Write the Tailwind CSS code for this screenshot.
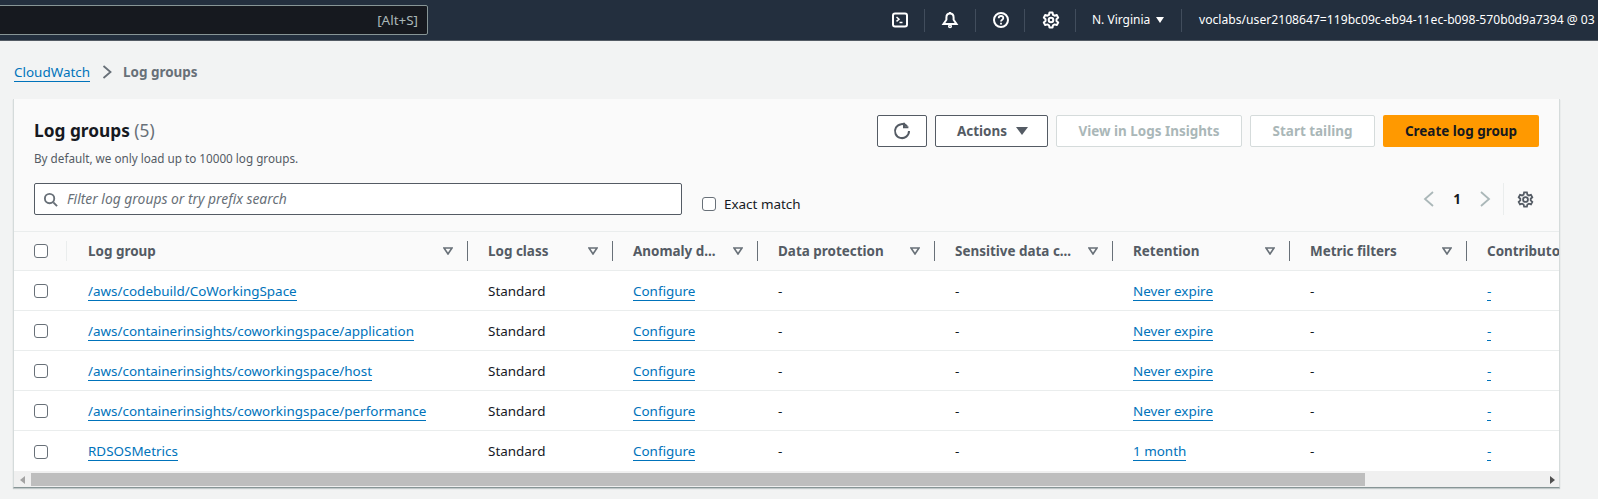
<!DOCTYPE html>
<html lang="en">
<head>
<meta charset="UTF-8">
<title>Log groups | CloudWatch</title>
<script src="https://cdn.jsdelivr.net/npm/@tailwindcss/browser@4"></script>
</head>
<body class="h-[499px] w-[1598px] overflow-hidden bg-[#f2f3f3] font-['Noto_Sans',sans-serif] text-[13.45px] text-[#16191f]">

<!-- top nav -->
<header class="flex h-[41px] items-center overflow-hidden border-b border-[#545b64] bg-[#232f3e] text-white">
  <div class="ml-[-2px] flex h-[30px] w-[430px] shrink-0 items-center justify-end rounded-r-[2px] border border-[#879596] bg-[#16191f] pr-[9px] text-[13.45px] text-[#aab7b8]">[Alt+S]</div>
  <div class="ml-[463px] flex items-center">
    <svg class="h-[18px] w-[18px]" viewBox="0 0 18 18" fill="none" stroke="white" stroke-width="2"><rect x="2" y="2.500" width="14" height="13" rx="2"/><path d="M5.500 6 8 8.200 5.500 10.400" stroke-width="1.500"/><path d="M8.500 11.500h3" stroke-width="1.500"/></svg>
    <div class="ml-[15px] h-[23px] w-px bg-[#414d5c]"></div>
    <svg class="ml-[16px] h-[18px] w-[18px]" viewBox="0 0 18 18" fill="none" stroke="white" stroke-width="2"><path d="M9 2.500c-2.500 0-3.600 2-3.600 4v2.300L2.500 13h13l-2.900-4.200V6.500c0-2-1.100-4-3.600-4Z"/><path d="M9 1v1.500"/><circle cx="9" cy="15.300" r="1.300" stroke-width="1.500"/></svg>
    <div class="ml-[16px] h-[23px] w-px bg-[#414d5c]"></div>
    <svg class="ml-[16px] h-[18px] w-[18px]" viewBox="0 0 18 18" fill="none" stroke="white" stroke-width="2"><circle cx="9" cy="9" r="7"/><path d="M6.700 7.200C6.700 5.900 7.700 5 9 5s2.300.9 2.300 2.100c0 1.700-2.300 1.700-2.300 3.500" stroke-width="1.800"/><path d="M9 11.800v1.700" stroke-width="1.800"/></svg>
    <div class="ml-[14px] h-[23px] w-px bg-[#414d5c]"></div>
    <svg class="ml-[17px] h-[18px] w-[18px]" viewBox="0 0 18 18" fill="none" stroke="white" stroke-width="2" stroke-linejoin="round"><circle cx="9" cy="9" r="2.300"/><path d="M7.500 1.500h3l.5 2.300 1.600.9 2.200-.7 1.400 2.600-1.700 1.600v1.700l1.700 1.600-1.400 2.600-2.200-.7-1.600.9-.5 2.300h-3l-.5-2.300-1.600-.9-2.200.7L1.800 11.500l1.700-1.600V8.200L1.800 6.600l1.400-2.600 2.200.7L7 3.800Z"/></svg>
    <div class="ml-[15px] h-[23px] w-px bg-[#414d5c]"></div>
    <span class="ml-[16px] w-[57px] whitespace-nowrap text-[12px]">N. Virginia</span>
    <span class="ml-[7px] h-0 w-0 border-x-[4px] border-t-[6px] border-x-transparent border-t-white"></span>
    <div class="ml-[17px] h-[23px] w-px bg-[#414d5c]"></div>
    <span class="ml-[17px] whitespace-nowrap text-[12.15px]">voclabs/user2108647=119bc09c-eb94-11ec-b098-570b0d9a7394 @ 03</span>
  </div>
</header>

<!-- breadcrumb -->
<nav class="flex h-[58px] items-center pl-[14px] pt-[4px]">
  <a class="border-b border-[#0073bb] leading-[18px] text-[#0073bb]">CloudWatch</a>
  <svg class="ml-[12px] h-[14px] w-[10px]" viewBox="0 0 10 14" fill="none" stroke="#687078" stroke-width="1.800"><path d="M1.500 1l7 6-7 6"/></svg>
  <span class="ml-[11px] font-bold text-[#687078]">Log groups</span>
</nav>

<!-- card -->
<section class="ml-[13px] h-[389px] w-[1547px] overflow-hidden border-x border-b border-[#d5dbdb] border-b-[#879596] bg-[#fafafa] shadow-[0_1px_1px_rgba(0,28,36,0.2)]">
  <div class="flex items-start justify-between pl-[20px] pr-[20px] pt-[16px]">
    <div>
      <h1 class="text-[17.3px] font-bold leading-[32px]">Log groups <span class="font-normal text-[#687078]">(5)</span></h1>
      <p class="mt-[3px] text-[11.7px] leading-[16px] text-[#545b64]">By default, we only load up to 10000 log groups.</p>
    </div>
    <div class="flex gap-[8px] font-bold">
      <button class="flex h-[32px] w-[50px] items-center justify-center rounded-[2px] border border-[#545b64] bg-white">
        <svg class="h-[18px] w-[18px]" viewBox="0 0 18 18" fill="none" stroke="#545b64" stroke-width="2"><path d="M14 4.200A7 7 0 1 0 16 9"/><path d="M11 .8v4.400h4.400"/></svg>
      </button>
      <button class="flex h-[32px] w-[113px] items-center justify-center gap-[9px] rounded-[2px] border border-[#545b64] bg-white pl-[2px] text-[#545b64]">Actions <span class="h-0 w-0 border-x-[6px] border-t-[8px] border-x-transparent border-t-[#545b64]"></span></button>
      <button class="h-[32px] w-[186px] rounded-[2px] border border-[#d5dbdb] bg-white text-[#aab7b8]">View in Logs Insights</button>
      <button class="h-[32px] w-[125px] rounded-[2px] border border-[#d5dbdb] bg-white text-[#aab7b8]">Start tailing</button>
      <button class="h-[32px] w-[156px] rounded-[2px] bg-[#ff9900] text-[#16191f]">Create log group</button>
    </div>
  </div>

  <div class="mt-[17px] flex h-[32px] items-center pl-[20px] pr-[25px]">
    <div class="flex h-[32px] w-[648px] items-center rounded-[2px] border border-[#545b64] bg-white pl-[8px] text-[13.85px] italic text-[#687078]">
      <svg class="mr-[9px] h-[15px] w-[15px]" viewBox="0 0 16 16" fill="none" stroke="#687078" stroke-width="2"><circle cx="7" cy="7" r="5"/><path d="m11 11 4 4"/></svg>
      Filter log groups or try prefix search
    </div>
    <label class="ml-[20px] mt-[10px] flex items-center gap-[8px] text-[#16191f]">
      <span class="h-[14px] w-[14px] rounded-[3px] border border-[#687078] bg-white"></span>
      Exact match
    </label>
    <div class="ml-auto flex items-center">
      <svg class="h-[16px] w-[12px]" viewBox="0 0 12 16" fill="none" stroke="#aab7b8" stroke-width="1.800"><path d="M10 1 2 8l8 7"/></svg>
      <span class="ml-[18px] font-bold">1</span>
      <svg class="ml-[18px] h-[16px] w-[12px]" viewBox="0 0 12 16" fill="none" stroke="#aab7b8" stroke-width="1.800"><path d="m2 1 8 7-8 7"/></svg>
      <div class="ml-[12px] h-[32px] w-px bg-[#eaeded]"></div>
      <svg class="ml-[13px] h-[17px] w-[17px]" viewBox="0 0 18 18" fill="none" stroke="#545b64" stroke-width="1.900"><circle cx="9" cy="9" r="2.600"/><path d="M7.500 1.500h3l.5 2.300 1.600.9 2.200-.7 1.400 2.600-1.700 1.600v1.700l1.700 1.600-1.400 2.600-2.200-.7-1.600.9-.5 2.300h-3l-.5-2.300-1.600-.9-2.200.7L1.800 11.500l1.700-1.600V8.200L1.800 6.600l1.400-2.600 2.200.7L7 3.800Z"/></svg>
    </div>
  </div>

  <!-- table, wider than the card so the last column is cut off -->
  <div class="mt-[16px] overflow-hidden">
    <div class="w-[1700px]">
      <div class="grid h-[40px] grid-cols-[53px_401px_145px_145px_177px_178px_177px_177px_177px] items-center border-y border-[#eaeded] font-bold text-[#545b64]">
        <div class="flex h-[20px] items-center justify-between"><span class="ml-[20px] h-[14px] w-[14px] rounded-[3px] border border-[#687078] bg-white"></span><span class="h-[20px] w-px bg-[#eaeded]"></span></div>
        <div class="flex h-[20px] items-center justify-between border-r border-[#687078] pl-[21px] pr-[14px]">Log group<svg class="h-[8px] w-[10px]" viewBox="0 0 10 8" fill="#fafafa" stroke="#687078" stroke-width="1.600"><path d="M1 1h8L5 7Z"/></svg></div>
        <div class="flex h-[20px] items-center justify-between border-r border-[#687078] pl-[20px] pr-[14px]">Log class<svg class="h-[8px] w-[10px]" viewBox="0 0 10 8" fill="#fafafa" stroke="#687078" stroke-width="1.600"><path d="M1 1h8L5 7Z"/></svg></div>
        <div class="flex h-[20px] items-center justify-between border-r border-[#687078] pl-[20px] pr-[14px]">Anomaly d...<svg class="h-[8px] w-[10px]" viewBox="0 0 10 8" fill="#fafafa" stroke="#687078" stroke-width="1.600"><path d="M1 1h8L5 7Z"/></svg></div>
        <div class="flex h-[20px] items-center justify-between border-r border-[#687078] pl-[20px] pr-[14px]">Data protection<svg class="h-[8px] w-[10px]" viewBox="0 0 10 8" fill="#fafafa" stroke="#687078" stroke-width="1.600"><path d="M1 1h8L5 7Z"/></svg></div>
        <div class="flex h-[20px] items-center justify-between border-r border-[#687078] pl-[20px] pr-[14px]">Sensitive data c...<svg class="h-[8px] w-[10px]" viewBox="0 0 10 8" fill="#fafafa" stroke="#687078" stroke-width="1.600"><path d="M1 1h8L5 7Z"/></svg></div>
        <div class="flex h-[20px] items-center justify-between border-r border-[#687078] pl-[20px] pr-[14px]">Retention<svg class="h-[8px] w-[10px]" viewBox="0 0 10 8" fill="#fafafa" stroke="#687078" stroke-width="1.600"><path d="M1 1h8L5 7Z"/></svg></div>
        <div class="flex h-[20px] items-center justify-between border-r border-[#687078] pl-[20px] pr-[14px]">Metric filters<svg class="h-[8px] w-[10px]" viewBox="0 0 10 8" fill="#fafafa" stroke="#687078" stroke-width="1.600"><path d="M1 1h8L5 7Z"/></svg></div>
        <div class="flex h-[20px] items-center pl-[20px]">Contributor insights</div>
      </div>

      <div id="rows" class="bg-white"></div>
    </div>
  </div>

  <!-- horizontal scrollbar -->
  <div class="flex h-[17px] items-center bg-[#f0f0f0]">
    <span class="ml-[6px] h-0 w-0 border-y-[4px] border-r-[5px] border-y-transparent border-r-[#a3a3a3]"></span>
    <div class="ml-[6px] h-[13px] w-[1334px] bg-[#bebebe]"></div>
    <span class="ml-auto mr-[4px] h-0 w-0 border-y-[4px] border-l-[5px] border-y-transparent border-l-[#505050]"></span>
  </div>
</section>

<script>
  var groups = [
    ["/aws/codebuild/CoWorkingSpace", "Never expire"],
    ["/aws/containerinsights/coworkingspace/application", "Never expire"],
    ["/aws/containerinsights/coworkingspace/host", "Never expire"],
    ["/aws/containerinsights/coworkingspace/performance", "Never expire"],
    ["RDSOSMetrics", "1 month"]
  ];
  var link = "border-b border-[#0073bb] leading-[18px] text-[#0073bb]";
  document.getElementById("rows").innerHTML = groups.map(function (g, i) {
    var line = i < groups.length - 1 ? "border-b border-[#eaeded]" : "";
    return '<div class="grid h-[40px] grid-cols-[53px_401px_145px_145px_177px_178px_177px_177px_177px] items-center pt-[1px] [&>div]:pl-[20px] ' + line + '">' +
      '<span class="ml-[20px] h-[14px] w-[14px] rounded-[3px] border border-[#687078] bg-white"></span>' +
      '<div class="ml-[1px]"><a class="' + link + '">' + g[0] + '</a></div>' +
      '<div>Standard</div>' +
      '<div><a class="' + link + '">Configure</a></div>' +
      '<div>-</div><div>-</div>' +
      '<div><a class="' + link + '">' + g[1] + '</a></div>' +
      '<div>-</div>' +
      '<div><a class="' + link + '">-</a></div>' +
      '</div>';
  }).join("");
</script>
</body>
</html>
